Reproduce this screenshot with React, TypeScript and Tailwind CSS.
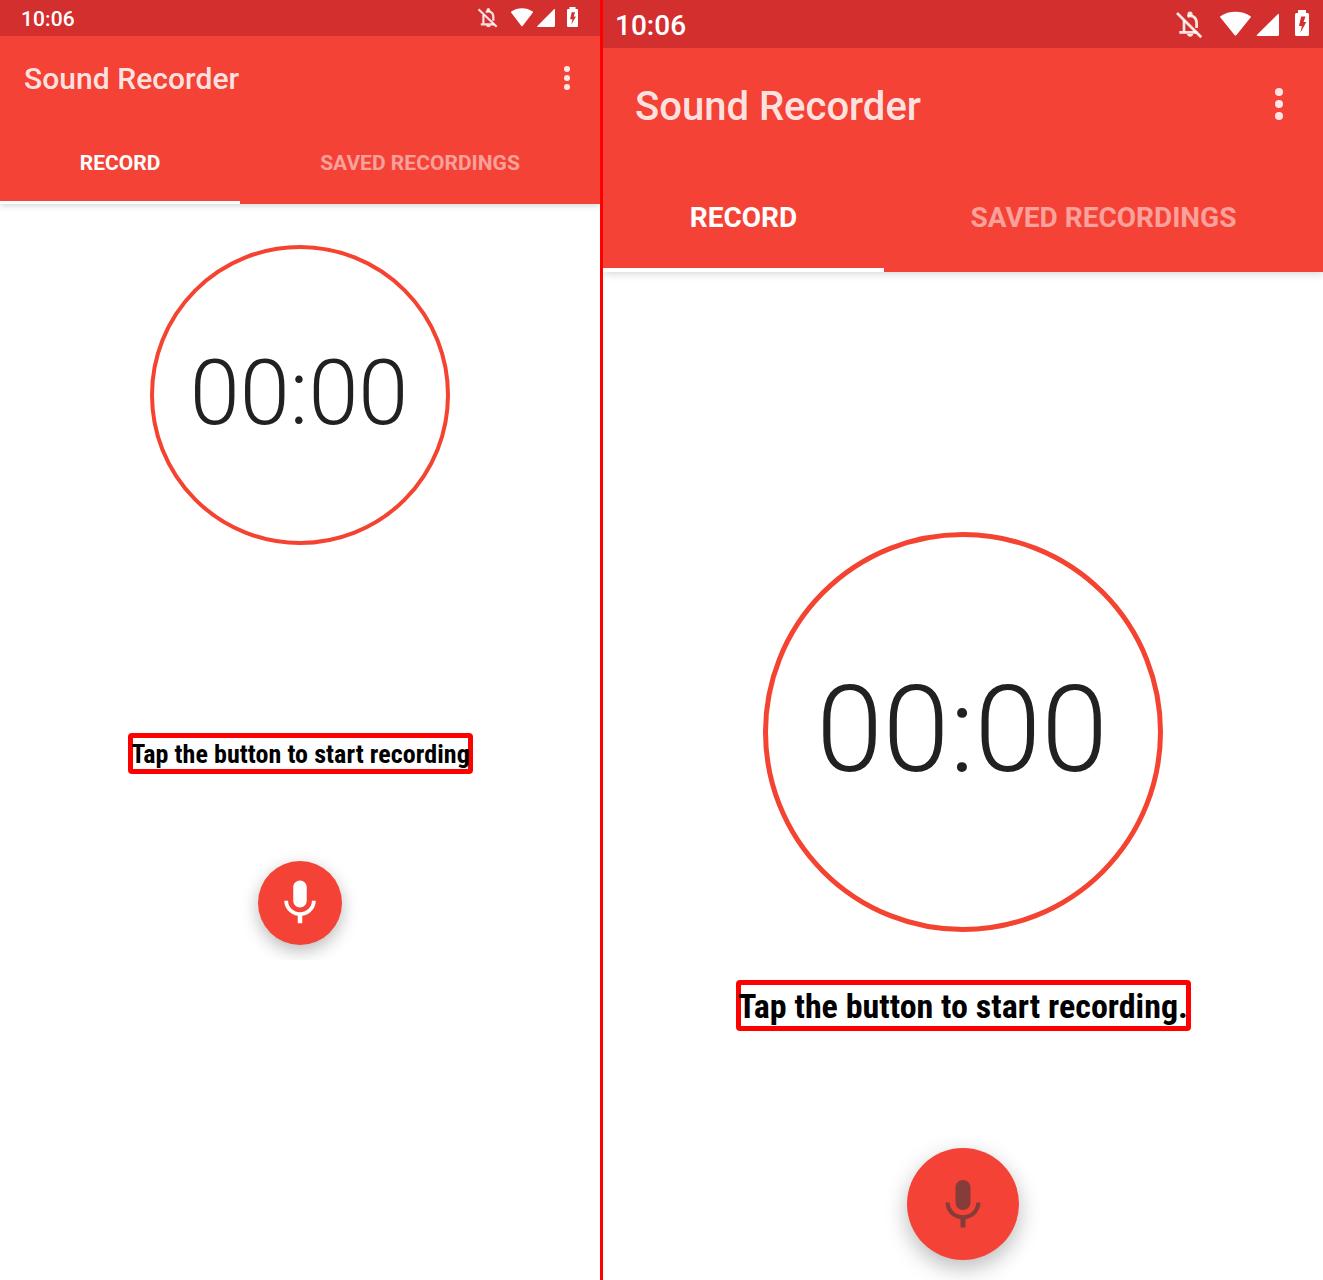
import React from "react";

type Size = "small" | "large";

const styles = {
  small: {
    screen: "w-[600px]",
    status: "h-9 pl-[21px] text-[21px] leading-[38px] tracking-[0.1px]",
    bar: "h-[84px] pl-6 text-[30px]",
    title: "tracking-[0.05px]",
    dots: "mr-[30px] gap-[3px]",
    nudge: "-mr-[10px]",
    dot: "size-1.5",
    tabs: "h-[84px] text-[21px]",
    firstTab: "w-[240px] border-b-[3px] pt-[6px]",
    secondTab: "pt-[3px] tracking-[0.02px]",
    shadow: "shadow-[0_2px_6px_rgba(0,0,0,0.16)]",
    ring: "mt-[41px] size-[300px] border-4 text-[90px] pb-[2px] pr-[2px]",
    caption: "mt-[188px] h-[41px] w-[345px] border-[5px] text-[26px] tracking-[0.07px] pt-[2px] pl-px",
    fabArea: "mt-[47px] h-[139px] pt-10",
    fab: "size-[84px] shadow-[0_6px_17px_rgba(0,0,0,0.27)]",
    mic: "size-[54px] text-white",
  },
  large: {
    screen: "w-[720px]",
    status: "h-12 pl-3 text-[28px] leading-[51px]",
    bar: "h-28 pl-8 text-[40px]",
    title: "pt-[6px]",
    dots: "mr-10 gap-1",
    nudge: "",
    dot: "size-2",
    tabs: "h-28 text-[28px]",
    firstTab: "w-[281px] border-b-4 pt-2",
    secondTab: "pt-1",
    shadow: "shadow-[0_2px_8px_rgba(0,0,0,0.16)]",
    ring: "mt-[260px] size-[400px] border-[5px] text-[120px] pb-[4px] pr-[2px]",
    caption: "mt-[48px] h-[51px] w-[455px] border-[5px] text-[34px] pt-[2px]",
    fabArea: "mt-[77px] h-[172px] pt-10",
    fab: "size-28 shadow-[0_8px_22px_rgba(0,0,0,0.27)]",
    mic: "mt-[2px] size-[60px] text-[#863c38]",
  },
};

function Mic({ className }: { className: string }) {
  return (
    <svg viewBox="0 0 24 24" fill="currentColor" className={className}>
      <path d="M12 14c1.66 0 2.99-1.34 2.99-3L15 5c0-1.66-1.34-3-3-3S9 3.34 9 5v6c0 1.66 1.34 3 3 3zm5.3-3c0 3-2.54 5.1-5.3 5.1S6.7 14 6.7 11H5c0 3.41 2.72 6.23 6 6.72V21h2v-3.28c3.28-.48 6-3.3 6-6.72h-1.7z" />
    </svg>
  );
}

function SmallStatusIcons() {
  return (
    <svg viewBox="0 0 150 36" className="h-9 w-[150px]">
      <g fill="none" stroke="#fff" strokeOpacity=".85" strokeWidth="2.2">
        <path d="M18.5 9.2l18.2 17.6" />
        <path d="M23.4 15v9.4M20.8 24.4h13.4M25.8 12c3.8-1.9 7.5.6 7.5 4.5v4.2" />
      </g>
      <path d="M26.6 11.5V9.5q1.8-2.8 3.6 0v2zM26 25.3h5c-.4 2.6-4.6 2.6-5 0z" fill="#fff" fillOpacity=".85" />
      <path d="M62.6 26q-.6.6-1.2 0L51.1 12.6q-.3-.6.2-1c6-4.6 15.4-4.6 21.4 0q.5.4.2 1z" fill="#fff" />
      <path d="M95 9.5v16q0 1.5-1.5 1.5H77.8q-1.4 0-.4-1.1L94 9.2q1-.7 1 .3z" fill="#fff" />
      <path fillRule="evenodd" d="M109.5 7h6v2h1.5q1 0 1 1v16q0 1-1 1h-9q-1 0-1-1V10q0-1 1-1h1.5zM111.7 12.2h3.4l-1.5 4.4h2.3l-4.6 8.2 1.2-5.6h-2.4z" fill="#fff" />
    </svg>
  );
}

function LargeStatusIcons() {
  return (
    <svg viewBox="0 0 163 48" className="h-12 w-[163px]">
      <g fill="none" stroke="#fff" strokeOpacity=".87" strokeWidth="2.7">
        <path d="M17 13l24.3 24.2" />
        <path d="M24 20v12M19.3 32.4h18M27.4 16.6c4.8-2.3 9.2.7 9.2 6.5v5" />
      </g>
      <path d="M27.5 16v-3q2.5-2.8 5 0v3zM27 34h6.2c-.4 3.6-5.8 3.6-6.2 0z" fill="#fff" fillOpacity=".87" />
      <path d="M76.3 35.2q-.8.8-1.6 0L60.2 17.3q-.4-.7.2-1.1c8.8-5.9 21.4-5.9 30.2 0q.6.4.2 1.1z" fill="#fff" />
      <path d="M119 14.5v20q0 1.5-1.5 1.5H97.7q-1.7 0-.6-1.3l20.6-20.4q1.3-.8 1.3.2z" fill="#fff" />
      <path fillRule="evenodd" d="M138 10h8v3h1.5q1.5 0 1.5 1.5v20q0 1.5-1.5 1.5h-11q-1.5 0-1.5-1.5v-20q0-1.5 1.5-1.5h1.5zM141.2 16.5h4.3l-2 5.5h2.8l-6 11 1.6-7h-2.9z" fill="#fff" />
    </svg>
  );
}

function Recorder({ size, caption }: { size: Size; caption: string }) {
  const s = styles[size];
  return (
    <section className={`flex h-full flex-col overflow-hidden bg-white ${s.screen}`}>
      <header className={`shrink-0 bg-[#f44336] text-white ${s.shadow}`}>
        <div className={`flex justify-between bg-[#d32f2f] font-medium ${s.status}`}>
          <span>10:06</span>
          <div className={s.nudge}>{size === "small" ? <SmallStatusIcons /> : <LargeStatusIcons />}</div>
        </div>
        <div className={`flex items-center justify-between font-medium text-white/87 ${s.bar}`}>
          <h1 className={s.title}>Sound Recorder</h1>
          <div className={`flex flex-col ${s.dots}`}>
            <i className={`rounded-full bg-white/87 ${s.dot}`} />
            <i className={`rounded-full bg-white/87 ${s.dot}`} />
            <i className={`rounded-full bg-white/87 ${s.dot}`} />
          </div>
        </div>
        <nav className={`flex font-bold ${s.tabs}`}>
          <div className={`flex items-center justify-center border-white ${s.firstTab}`}>RECORD</div>
          <div className={`flex flex-1 items-center justify-center text-white/50 ${s.secondTab}`}>SAVED RECORDINGS</div>
        </nav>
      </header>
      <main className="flex flex-col items-center">
        <div className={`flex shrink-0 items-center justify-center rounded-full border-[#f44330] font-light leading-none text-[#212121] ${s.ring}`}>
          00:00
        </div>
        <div
          className={`flex shrink-0 items-center justify-center rounded-[4px] border-[#ff0000] font-bold whitespace-nowrap text-black [font-stretch:75%] ${s.caption}`}
        >
          {caption}
        </div>
        <div className={`flex w-full shrink-0 justify-center overflow-hidden ${s.fabArea}`}>
          <div className={`flex shrink-0 items-center justify-center rounded-full bg-[#f44336] ${s.fab}`}>
            <Mic className={s.mic} />
          </div>
        </div>
      </main>
    </section>
  );
}

export default function App() {
  return (
    <div className="flex h-[1280px] w-[1323px] overflow-hidden bg-[#ff0000] font-['Roboto',sans-serif]">
      <Recorder size="small" caption="Tap the button to start recording" />
      <div className="w-[3px] shrink-0" />
      <Recorder size="large" caption="Tap the button to start recording." />
    </div>
  );
}
